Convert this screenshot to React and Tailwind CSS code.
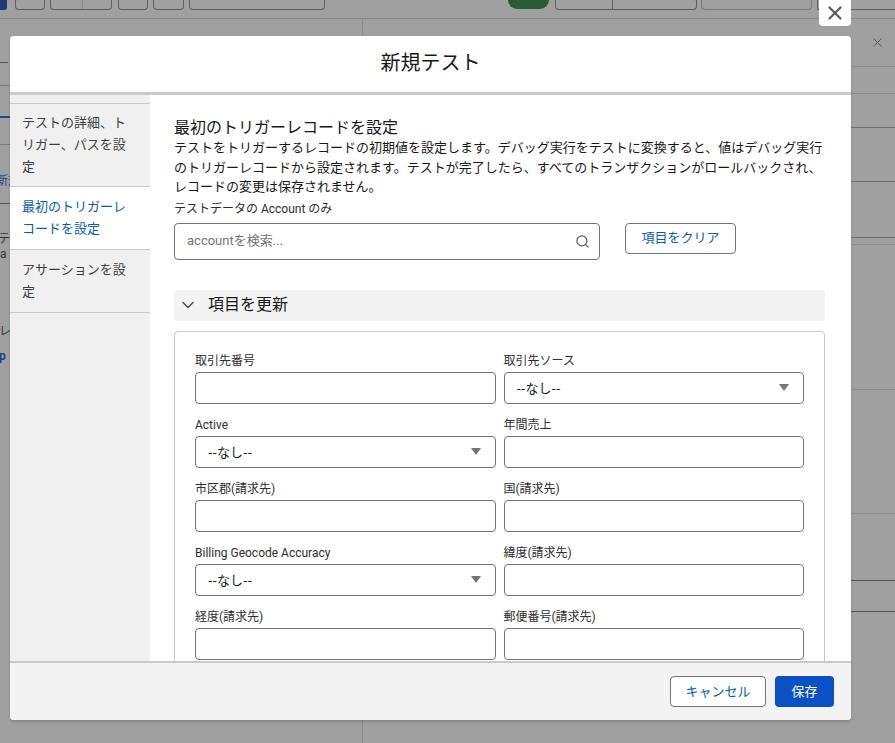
import React from 'react';
import { Search, ChevronDown, X } from 'lucide-react';

const rows = [
  [
    { label: '取引先番号', type: 'input' },
    { label: '取引先ソース', type: 'select' },
  ],
  [
    { label: 'Active', type: 'select' },
    { label: '年間売上', type: 'input' },
  ],
  [
    { label: '市区郡(請求先)', type: 'input' },
    { label: '国(請求先)', type: 'input' },
  ],
  [
    { label: 'Billing Geocode Accuracy', type: 'select' },
    { label: '緯度(請求先)', type: 'input' },
  ],
  [
    { label: '経度(請求先)', type: 'input' },
    { label: '郵便番号(請求先)', type: 'input' },
  ],
  [
    { label: '都道府県(請求先)', type: 'input' },
    { label: '町名・番地(請求先)', type: 'input' },
  ],
];

const steps = [
  { name: 'テストの詳細、トリガー、パスを設定', active: false },
  { name: '最初のトリガーレコードを設定', active: true },
  { name: 'アサーションを設定', active: false },
];

function Field({ label, type }) {
  return (
    <div className="flex flex-col">
      <div className="text-[12px] leading-[22px] text-[#2e2e2e]">{label}</div>
      <div className="flex h-[32px] items-center justify-between rounded-[4px] border border-[#747474] bg-white px-3">
        {type === 'select' && (
          <>
            <span className="font-['Noto_Sans_CJK_JP',sans-serif] text-[13px] text-[#181818]">--なし--</span>
            <svg width="10" height="7" viewBox="0 0 10 7" className="mr-[2px]">
              <path d="M0 0h10L5 7z" fill="#747474" />
            </svg>
          </>
        )}
      </div>
    </div>
  );
}

function BackgroundPage() {
  return (
    <div className="flex h-full flex-col">
      {/* dimmed toolbar */}
      <div className="flex h-[19px] shrink-0 items-start border-b border-[#878787]">
        <div className="h-[10px] w-[7px] rounded-br-[3px] bg-[#1d3a7a]" />
        <div className="ml-[8px] h-[10px] w-[30px] rounded-b-[4px] border-x border-b border-[#5f5f5f]" />
        <div className="ml-[5px] flex h-[10px] w-[62px] rounded-b-[4px] border-x border-b border-[#5f5f5f]">
          <div className="w-[32px] border-r border-[#8a8a8a]" />
        </div>
        <div className="ml-[6px] h-[10px] w-[30px] rounded-b-[4px] border-x border-b border-[#5f5f5f]" />
        <div className="ml-[5px] h-[10px] w-[31px] rounded-b-[4px] border-x border-b border-[#5f5f5f]" />
        <div className="ml-[5px] h-[10px] w-[136px] rounded-b-[4px] border-x border-b border-[#5f5f5f]" />
        <div className="ml-[183px] h-[9px] w-[41px] rounded-b-full bg-[#2b5a36]" />
        <div className="ml-[6px] flex h-[10px] w-[142px] rounded-b-[4px] border-x border-b border-[#5f5f5f]">
          <div className="w-[57px] border-r border-[#5f5f5f]" />
        </div>
        <div className="ml-[4px] h-[10px] w-[111px] rounded-b-[4px] border-x border-b border-[#7a7a7a]" />
        <div className="ml-[5px] h-[10px] flex-1 border-b border-l border-[#5f5f5f]" />
      </div>

      <div className="flex flex-1">
        {/* left pane */}
        <div className="flex w-[363px] flex-col border-r border-[#8c8c8c] text-[12px]">
          <div className="mt-[43px] w-[8px] border-b border-[#555]" />
          <div className="mt-[22px] w-[10px] border-b border-[#7a7a7a]" />
          <div className="mt-[30px] w-[10px] border-b-2 border-[#27438c]" />
          <div className="mt-[26px] w-[10px] border-b border-[#7a7a7a]" />
          <div className="-ml-[4px] mt-[28px] leading-[16px] text-[#1c3f8c]">新規</div>
          <div className="mt-[14px] w-[10px] border-b border-[#555]" />
          <div className="-ml-[2px] mt-[27px] leading-[16px] text-[#333]">テ</div>
          <div className="mt-0 leading-[14px] text-[#333]">a</div>
          <div className="-ml-[1px] mt-[62px] leading-[16px] text-[#333]">レ</div>
          <div className="-ml-[1px] mt-[9px] font-bold leading-[16px] text-[#1c3f8c]">p</div>
        </div>
        {/* right pane */}
        <div className="flex flex-1 flex-col">
          <div className="flex h-[48px] items-center justify-end border-b border-[#8c8c8c] pr-[10px]">
            <X size={15} strokeWidth={1.6} color="#555" />
          </div>
          <div className="h-[27px] border-b border-[#8c8c8c]" />
          <div className="h-[34px] border-b border-[#6e6e6e]" />
          <div className="h-[54px] border-b border-[#6e6e6e]" />
          <div className="h-[56px] border-b border-[#6e6e6e]" />
          <div className="h-[7px] border-b border-[#8c8c8c]" />
          <div className="h-[145px] border-b border-[#8c8c8c]" />
          <div className="h-[124px] border-b border-[#8c8c8c]" />
          <div className="h-[67px] border-b border-[#555]" />
          <div className="h-[31px] border-b border-[#555]" />
        </div>
      </div>
    </div>
  );
}

export default function App() {
  return (
    <div className="relative h-[743px] w-[895px] overflow-hidden bg-[#a0a0a0] font-['Roboto','Noto_Sans_CJK_JP',sans-serif] text-[#181818]">
      <BackgroundPage />

      {/* close button */}
      <button className="absolute left-[819px] top-0 flex h-[26px] w-[32px] items-center justify-center rounded-b-[4px] bg-white">
        <X size={22} strokeWidth={2.4} color="#5c5c5c" />
      </button>

      {/* modal */}
      <div className="absolute left-[10px] top-[36px] flex h-[684px] w-[841px] flex-col overflow-hidden rounded-[4px] bg-white shadow-[0_2px_3px_rgba(0,0,0,0.16)]">
        <div className="flex h-[59px] shrink-0 items-center justify-center border-b-[3px] border-[#c9c9c9] pb-[2px]">
          <h2 className="text-[20px] font-normal leading-[28px] text-[#181818]">新規テスト</h2>
        </div>

        <div className="flex min-h-0 flex-1">
          {/* sidebar */}
          <div className="w-[140px] shrink-0 bg-[#f0f0f0] pt-2">
            <div className="border-t border-[#c9c9c9]">
              {steps.map((s, i) => (
                <div
                  key={s.name}
                  className={`border-b border-[#c9c9c9] px-3 text-[13px] leading-[22px] ${
                    i === 0 ? 'py-[8px]' : 'py-[9px]'
                  } ${s.active ? 'bg-white text-[#0b5cab]' : 'text-[#3e3e3e]'}`}
                >
                  {s.name}
                </div>
              ))}
            </div>
          </div>

          {/* content */}
          <div className="min-w-0 flex-1 overflow-hidden pl-6 pr-[26px] pt-[23px]">
            <h3 className="text-[16px] font-normal leading-[20px] text-[#181818]">最初のトリガーレコードを設定</h3>
            <p className="whitespace-nowrap text-[13px] leading-[19.5px] text-[#181818]">
              テストをトリガーするレコードの初期値を設定します。デバッグ実行をテストに変換すると、値はデバッグ実行
              <br />
              のトリガーレコードから設定されます。テストが完了したら、すべてのトランザクションがロールバックされ、
              <br />
              レコードの変更は保存されません。
            </p>
            <div className="mt-[3px] text-[12px] leading-[19px] text-[#2e2e2e]">テストデータの Account のみ</div>

            <div className="mt-1 flex items-start gap-[25px]">
              <div className="flex h-[37px] w-[426px] items-center justify-between rounded-[4px] border border-[#747474] bg-white pl-3 pr-[9px]">
                <span className="text-[13px] text-[#747474]">accountを検索...</span>
                <Search size={15} strokeWidth={2} color="#5c5c5c" />
              </div>
              <button className="flex h-[31px] w-[111px] items-center justify-center rounded-[4px] border border-[#747474] bg-white text-[13px] text-[#0b5cab]">
                項目をクリア
              </button>
            </div>

            {/* section */}
            <div className="mt-[30px] flex h-[31px] items-center gap-[10px] rounded-[4px] bg-[#f3f3f3] pl-[4px]">
              <ChevronDown size={20} strokeWidth={1.6} color="#444" />
              <span className="text-[16px] leading-[20px] text-[#181818]">項目を更新</span>
            </div>

            <div className="mt-[10px] rounded-[4px] border border-[#c9c9c9] px-5 pb-5 pt-[18px]">
              <div className="grid grid-cols-2 gap-x-2 gap-y-[10px]">
                {rows.map((row, i) =>
                  row.map((f) => <Field key={`${i}-${f.label}`} label={f.label} type={f.type} />)
                )}
              </div>
            </div>
          </div>
        </div>

        {/* footer */}
        <div className="flex h-[59px] shrink-0 items-center justify-end gap-[9px] border-t-2 border-[#c9c9c9] bg-[#f3f3f3] pr-[17px]">
          <button className="flex h-[31px] w-[96px] items-center justify-center rounded-[4px] border border-[#747474] bg-white text-[13px] text-[#0b5cab]">
            キャンセル
          </button>
          <button className="flex h-[31px] w-[59px] items-center justify-center rounded-[4px] bg-[#0b50c4] text-[13px] text-white">
            保存
          </button>
        </div>
      </div>
    </div>
  );
}
